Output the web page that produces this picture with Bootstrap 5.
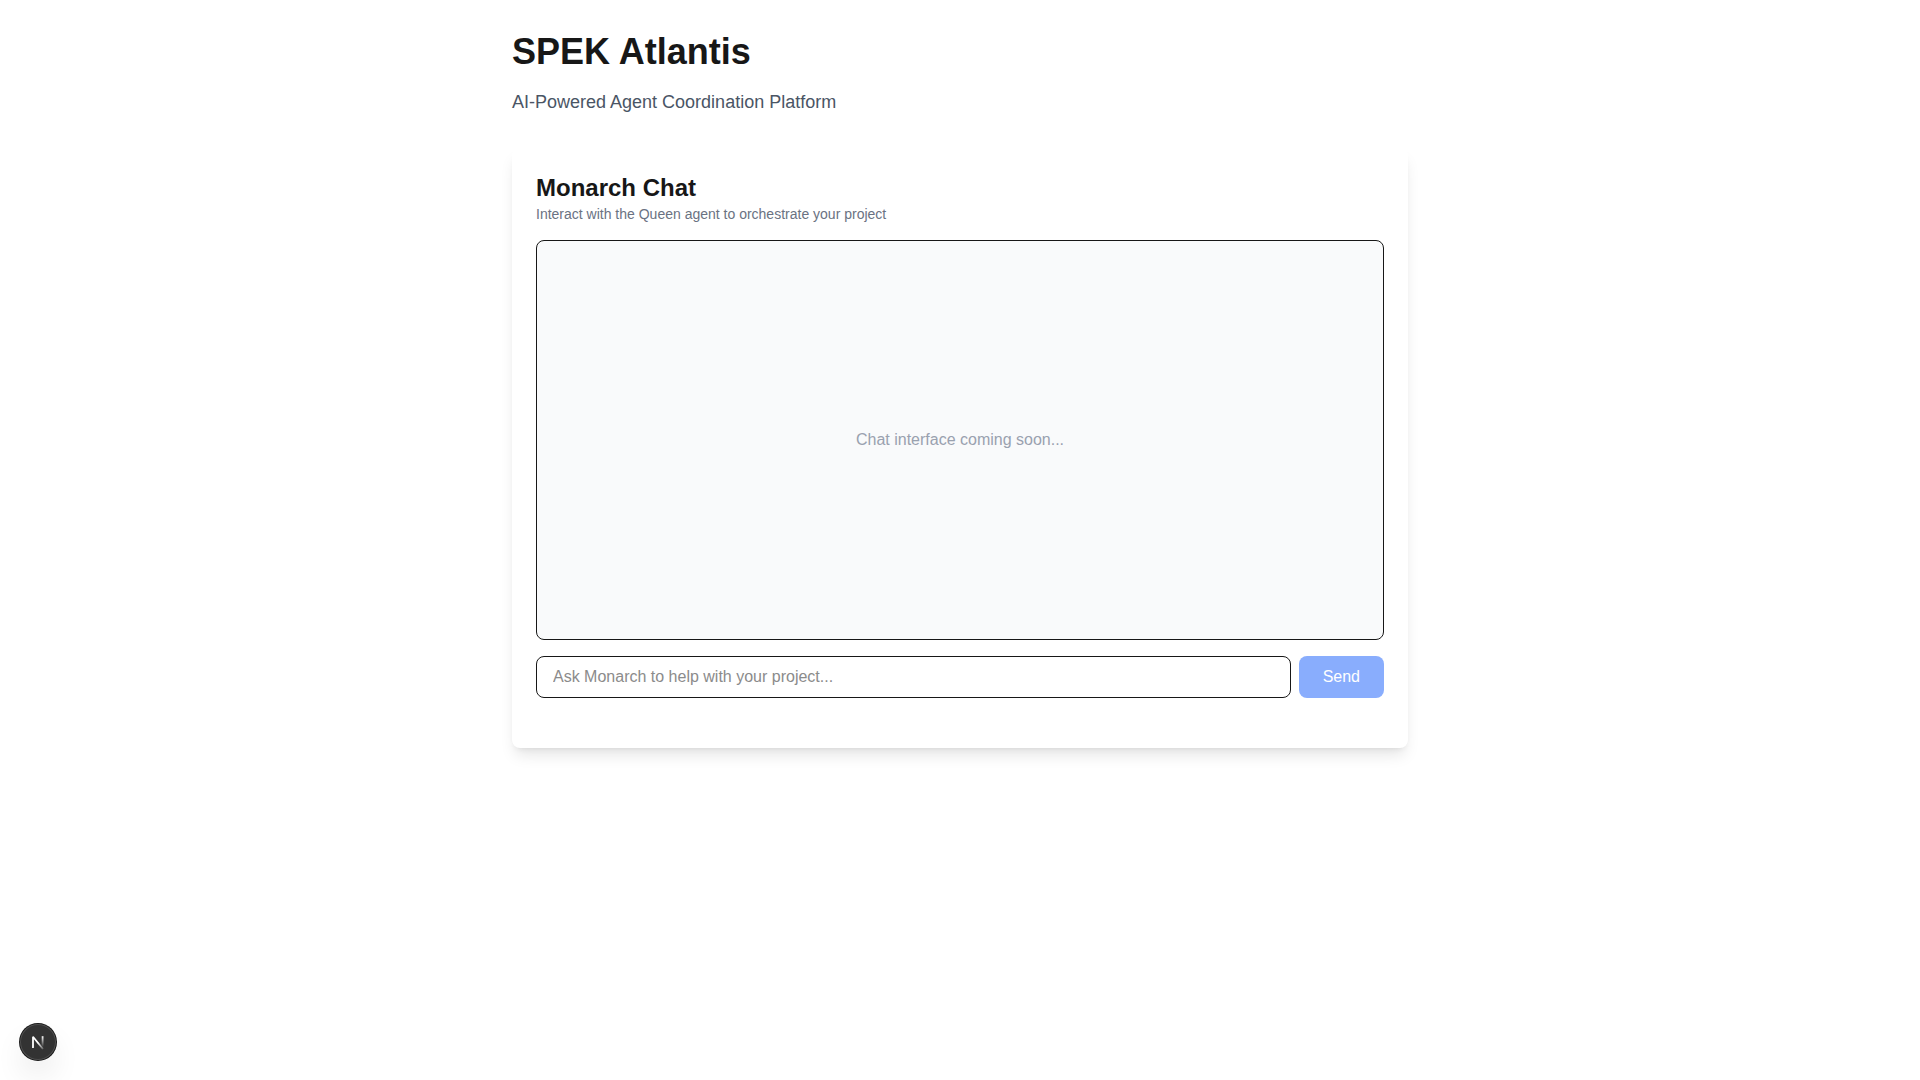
<!DOCTYPE html>
<html lang="en">
<head>
<meta charset="utf-8">
<meta name="viewport" content="width=device-width, initial-scale=1">
<title>SPEK Atlantis</title>
<link href="https://cdn.jsdelivr.net/npm/bootstrap@5.3.0/dist/css/bootstrap.min.css" rel="stylesheet">
<style>
  body { font-family: "Liberation Sans", Arial, sans-serif; color: #171717; background: #fff; }
  .page-column { max-width: 896px; }
  .page-title { font-size: 36px; line-height: 40px; }
  .page-subtitle { font-size: 18px; line-height: 28px; color: #4a5565; margin-bottom: 32px; }
  .chat-panel {
    min-height: 600px; border-radius: 8px; background: #fff;
    box-shadow: 0 10px 15px -3px rgba(0,0,0,.1), 0 4px 6px -4px rgba(0,0,0,.1);
  }
  .chat-title { font-size: 24px; line-height: 32px; }
  .chat-note { font-size: 14px; line-height: 20px; color: #6a7282; }
  .chat-log { height: 400px; border: 1px solid #171717; border-radius: 8px; background: #f9fafb; color: #99a1af; }
  .chat-input { height: 42px; padding: 8px 16px; border: 1px solid #171717; border-radius: 8px; color: #171717; }
  .chat-input::placeholder { color: #8b8b8b; }
  .send-btn {
    --bs-btn-padding-x: 24px; --bs-btn-border-width: 0px; --bs-btn-border-radius: 8px;
    --bs-btn-color: #fff; --bs-btn-bg: #155dfc;
    --bs-btn-disabled-color: #fff; --bs-btn-disabled-bg: #155dfc; --bs-btn-disabled-opacity: .5;
  }
  .dev-badge {
    left: 20px; bottom: 20px; width: 36px; height: 36px; background: #333;
    box-shadow: 0 0 0 1px #171717, inset 0 0 0 1px rgba(255,255,255,.14), 0 16px 32px -8px rgba(0,0,0,.24);
  }
</style>
<script src="https://cdn.jsdelivr.net/npm/bootstrap@5.3.0/dist/js/bootstrap.bundle.min.js" defer></script>
</head>
<body>
<div class="min-vh-100">
<main class="page-column mx-auto">
  <header class="pt-4">
    <h1 class="page-title fw-bold mt-2 mb-3">SPEK Atlantis</h1>
    <p class="page-subtitle">AI-Powered Agent Coordination Platform</p>
  </header>
  <section class="chat-panel p-4">
    <h2 class="chat-title fw-bold mb-0">Monarch Chat</h2>
    <p class="chat-note mb-3" id="chat-note">Interact with the Queen agent to orchestrate your project</p>
    <div class="chat-log d-flex align-items-center justify-content-center mb-3">Chat interface coming soon...</div>
    <form class="d-flex gap-2">
      <input type="text" class="form-control chat-input flex-grow-1" aria-label="Message to Monarch" aria-describedby="chat-note" placeholder="Ask Monarch to help with your project...">
      <button type="submit" class="btn send-btn" disabled>Send</button>
    </form>
  </section>
</main>
</div>
<button type="button" class="dev-badge position-fixed d-flex align-items-center justify-content-center rounded-circle border-0 p-0" aria-label="Open developer tools">
  <svg width="36" height="36" viewBox="0 0 36 36" fill="none" stroke-width="1.8" aria-hidden="true">
    <defs>
      <linearGradient id="diag" gradientUnits="userSpaceOnUse" x1="18" y1="19" x2="24" y2="26"><stop stop-color="#fff"/><stop offset="1" stop-color="#fff" stop-opacity="0.1"/></linearGradient>
      <linearGradient id="stem" gradientUnits="userSpaceOnUse" x1="22" y1="12" x2="22" y2="23"><stop stop-color="#fff"/><stop offset="1" stop-color="#fff" stop-opacity="0"/></linearGradient>
    </defs>
    <path d="M23 25 L13 12.7 V24" stroke="url(#diag)" stroke-linejoin="bevel"/>
    <path d="M22.6 12.2 V23.5" stroke="url(#stem)"/>
  </svg>
</button>
</body>
</html>
